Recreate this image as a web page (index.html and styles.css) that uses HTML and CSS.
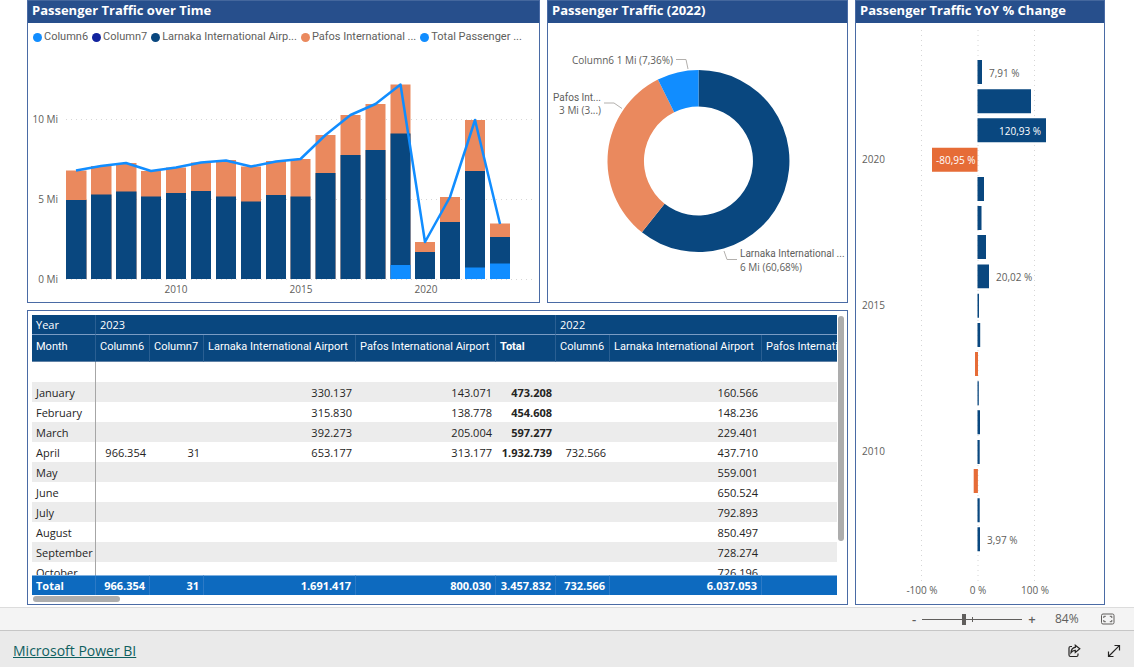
FILE: index.html
```html
<!DOCTYPE html>
<html lang="en">
<head>
<meta charset="utf-8">
<title>Passenger Traffic</title>
<link rel="stylesheet" href="styles.css">
</head>
<body>
<main class="report">
  <section class="panel panel-time">
    <h2 class="panel-title">Passenger Traffic over Time</h2>
    <ul class="legend">
      <li class="key key-sky">Column6</li>
      <li class="key key-indigo">Column7</li>
      <li class="key key-navy">Larnaka International Airp...</li>
      <li class="key key-coral">Pafos International ...</li>
      <li class="key key-sky">Total Passenger ...</li>
    </ul>
    <svg class="chart" viewBox="28 50 511 252" role="img" aria-label="Passengers by year">
      <g class="grid">
        <path d="M66 119.5H534M66 199.5H534M66 279.5H534"/>
      </g>
      <path class="fill-coral" d="M66 170.5h20.5V279h-20.5zM91 166h20.5V279h-20.5zM116 163h20.5V279h-20.5zM141 171h20V279h-20zM166 167.500h20V279h-20zM191 162.500h20V279h-20zM216 160h20V279h-20zM241 166.500h20V279h-20zM266 161h20V279h-20zM290.500 159h20V279h-20zM315.500 135h20V279h-20zM340.500 115h20V279h-20zM365.500 104h20V279h-20zM390.500 84.500h20V279h-20zM415 242h20V279h-20zM440 197h20V279h-20zM465 120h20V279h-20zM490 223.500h20V279h-20z"/>
      <path class="fill-navy" d="M66 200h20.5V279h-20.5zM91 194.500h20.5V279h-20.5zM116 191.500h20.5V279h-20.5zM141 196.500h20V279h-20zM166 193h20V279h-20zM191 191h20V279h-20zM216 196.500h20V279h-20zM241 201.500h20V279h-20zM266 195h20V279h-20zM290.500 196.500h20V279h-20zM315.500 173h20V279h-20zM340.500 155h20V279h-20zM365.500 150h20V279h-20zM390.500 133.500h20V279h-20zM415 252h20V279h-20zM440 222h20V279h-20zM465 171h20V279h-20zM490 237h20V279h-20z"/>
      <path class="fill-sky" d="M390.500 265h20V279h-20zM465 267.500h20V279h-20zM490 263.500h20V279h-20z"/>
      <polyline class="trend" points="76,170.500 101,166 126,163 151,171 176,167.500 201,162.500 226,160.500 251,166.500 276,161.500 300.500,159 325.500,135 350.500,115 375.500,104 400.500,84.500 425,242 450,197 475,120 500,224"/>
      <g class="label">
        <text class="end" x="58" y="123">10 Mi</text>
        <text class="end" x="58" y="203">5 Mi</text>
        <text class="end" x="58" y="283">0 Mi</text>
        <text class="mid" x="176" y="293">2010</text>
        <text class="mid" x="301" y="293">2015</text>
        <text class="mid" x="426" y="293">2020</text>
      </g>
    </svg>
  </section>

  <section class="panel panel-share">
    <h2 class="panel-title">Passenger Traffic (2022)</h2>
    <svg class="chart" viewBox="548 23 299 279" role="img" aria-label="Share of passengers in 2022">
      <path class="fill-navy" d="M698.500 70A91 91 0 1 1 641.900 232.300L664.600 203.700A54.500 54.500 0 1 0 698.500 106.500z"/>
      <path class="fill-coral" d="M641.900 232.300A91 91 0 0 1 657.900 79.600L674.200 112.200A54.500 54.500 0 0 0 664.600 203.700z"/>
      <path class="fill-sky" d="M657.900 79.600A91 91 0 0 1 698.500 70V106.500A54.500 54.500 0 0 0 674.200 112.200z"/>
      <path class="leader" d="M676 59.500H686L688 69M604 103H614L622 108.500M724 251L727 259.500H737"/>
      <g class="label">
        <text class="end" x="673" y="64">Column6 1 Mi (7,36%)</text>
        <text class="end name" x="601" y="101">Pafos Int...</text>
        <text class="end" x="601" y="114">3 Mi (3...)</text>
        <text class="name" x="740" y="257">Larnaka International ...</text>
        <text x="740" y="271">6 Mi (60,68%)</text>
      </g>
    </svg>
  </section>

  <section class="panel panel-change">
    <h2 class="panel-title">Passenger Traffic YoY % Change</h2>
    <svg class="chart" viewBox="856 23 248 581" role="img" aria-label="Year over year change">
      <g class="grid"><path d="M921.500 30V583M978 30V583M1034.500 30V583"/></g>
      <path class="fill-navy" d="M977.500 60h4.500v24h-4.500zM977.500 89.200h53.500v24h-53.500zM977.500 118.200h68.500v24h-68.500zM977.500 177h6.500v24h-6.500zM977.500 206h4v24h-4zM977.500 235h8.500v24h-8.500zM977.500 264.500h11.500v23.700h-11.500zM977.500 293.700h1.500v24h-1.500zM977.500 323h2.700v24h-2.700zM977.500 381.200h1.300v24h-1.300zM977.500 410.300h2.500v24h-2.500zM977.500 440h2.200v24h-2.200zM977.500 498.200h2.200v24h-2.200zM977.500 527.300h2.500v24h-2.500z"/>
      <path class="fill-orange" d="M932 147.700h45.500v24h-45.500zM975 352h3v24h-3zM973.700 469h4.200v24h-4.200z"/>
      <g class="label">
        <text x="989" y="77">7,91 %</text>
        <text class="on-bar" x="999" y="135">120,93 %</text>
        <text class="on-bar" x="936" y="164">-80,95 %</text>
        <text x="996" y="281">20,02 %</text>
        <text x="987" y="544">3,97 %</text>
        <text x="862" y="163">2020</text>
        <text x="862" y="309">2015</text>
        <text x="862" y="455">2010</text>
        <text class="mid" x="922" y="594">-100 %</text>
        <text class="mid" x="978" y="594">0 %</text>
        <text class="mid" x="1035" y="594">100 %</text>
      </g>
    </svg>
  </section>

  <section class="panel panel-table">
    <div class="scroller">
      <table class="matrix">
        <colgroup>
          <col class="w-month"><col class="w-short"><col class="w-short"><col class="w-larnaka"><col class="w-pafos"><col class="w-total"><col class="w-short"><col class="w-larnaka"><col class="w-pafos">
        </colgroup>
        <thead>
          <tr class="years"><th scope="row">Year</th><th colspan="5">2023</th><th colspan="3">2022</th></tr>
          <tr class="heads"><th>Month</th><th>Column6</th><th>Column7</th><th>Larnaka International Airport</th><th>Pafos International Airport</th><th class="strong">Total</th><th>Column6</th><th>Larnaka International Airport</th><th>Pafos International Airport</th></tr>
        </thead>
        <tbody>
          <tr><th scope="row"></th><td></td><td></td><td></td><td></td><td></td><td></td><td></td><td></td></tr>
          <tr><th scope="row">January</th><td></td><td></td><td>330.137</td><td>143.071</td><td class="strong">473.208</td><td></td><td>160.566</td><td></td></tr>
          <tr><th scope="row">February</th><td></td><td></td><td>315.830</td><td>138.778</td><td class="strong">454.608</td><td></td><td>148.236</td><td></td></tr>
          <tr><th scope="row">March</th><td></td><td></td><td>392.273</td><td>205.004</td><td class="strong">597.277</td><td></td><td>229.401</td><td></td></tr>
          <tr><th scope="row">April</th><td>966.354</td><td>31</td><td>653.177</td><td>313.177</td><td class="strong">1.932.739</td><td>732.566</td><td>437.710</td><td></td></tr>
          <tr><th scope="row">May</th><td></td><td></td><td></td><td></td><td></td><td></td><td>559.001</td><td></td></tr>
          <tr><th scope="row">June</th><td></td><td></td><td></td><td></td><td></td><td></td><td>650.524</td><td></td></tr>
          <tr><th scope="row">July</th><td></td><td></td><td></td><td></td><td></td><td></td><td>792.893</td><td></td></tr>
          <tr><th scope="row">August</th><td></td><td></td><td></td><td></td><td></td><td></td><td>850.497</td><td></td></tr>
          <tr><th scope="row">September</th><td></td><td></td><td></td><td></td><td></td><td></td><td>728.274</td><td></td></tr>
          <tr><th scope="row">October</th><td></td><td></td><td></td><td></td><td></td><td></td><td>726.196</td><td></td></tr>
        </tbody>
        <tfoot>
          <tr><th scope="row">Total</th><td>966.354</td><td>31</td><td>1.691.417</td><td>800.030</td><td>3.457.832</td><td>732.566</td><td>6.037.053</td><td></td></tr>
        </tfoot>
      </table>
    </div>
    <div class="bar-v"></div>
    <div class="bar-h"></div>
  </section>
</main>

<div class="zoombar">
  <button class="step" type="button" aria-label="Zoom out">-</button>
  <input class="slider" type="range" min="0" max="100" value="42" aria-label="Zoom">
  <button class="step" type="button" aria-label="Zoom in">+</button>
  <output class="percent">84%</output>
  <button class="icon-button" type="button" aria-label="Fit to page">
    <svg class="fit-icon" viewBox="0 0 14 12"><rect x="0.500" y="1" width="12.500" height="10" rx="1.500"/><path d="M2.800 5V3.300H4.800M8.800 3.300H10.800V5M10.800 7V8.700H8.800M4.800 8.700H2.800V7"/></svg>
  </button>
</div>

<footer class="footer">
  <a class="brand" href="#">Microsoft Power BI</a>
  <div class="actions">
    <button class="icon-button" type="button" aria-label="Share">
      <svg class="line-icon" viewBox="0 0 14 14"><path d="M5 2.500H3.500Q2 2.500 2 4V11Q2 12.500 3.500 12.500H9.500Q11 12.500 11 11V9.500"/><path d="M8.300 1.200L12.800 4.800L8.300 8.500V6.300Q5.500 6.200 4 8.600Q4.200 4 8.300 3.400Z"/></svg>
    </button>
    <button class="icon-button" type="button" aria-label="Full screen">
      <svg class="line-icon" viewBox="0 0 14 14"><path d="M2 12L12.300 1.700M7.500 1.500H12.500V6.500M1.500 7.500V12.500H6.500"/></svg>
    </button>
  </div>
</footer>
</body>
</html>
```
FILE: styles.css
```css
* { box-sizing: border-box; }

body {
  margin: 0;
  min-height: 100vh;
  display: flex;
  flex-direction: column;
  background: #fff;
  color: #252423;
  font-family: "Open Sans", "Noto Sans", sans-serif;
  font-size: 11px;
}

button {
  padding: 0;
  border: 0;
  background: none;
  color: inherit;
  font: inherit;
}

.report {
  display: grid;
  grid-template-columns: 513fr 301fr 250fr;
  grid-template-areas: "time share change" "table table change";
  align-items: start;
  gap: 7px;
  padding: 0 29px 2px 27px;
}

.panel {
  border: 1px solid #4a6ba5;
  border-top-width: 0;
  min-width: 0;
}

.panel-time { grid-area: time; }
.panel-share { grid-area: share; }
.panel-change { grid-area: change; }

.panel-title {
  margin: 0;
  padding: 0 4px;
  height: 23px;
  border-top: 1px solid #44679d;
  background: #274f8c;
  color: #fff;
  font-size: 13px;
  font-weight: 700;
  line-height: 18px;
  white-space: nowrap;
}

.chart { display: block; width: 100%; }

.legend {
  display: flex;
  gap: 4px;
  height: 27px;
  margin: 0;
  padding: 6px 5px 5px;
  list-style: none;
  color: #605e5c;
  font-family: Roboto, "Open Sans", sans-serif;
  line-height: 16px;
  white-space: nowrap;
}

.key { display: flex; align-items: center; gap: 2px; }
.key::before {
  content: "";
  width: 9px;
  height: 9px;
  border-radius: 50%;
  background: currentColor;
}
.key-sky::before { background: #118dff; }
.key-indigo::before { background: #12239e; }
.key-navy::before { background: #09477f; }
.key-coral::before { background: #ea895e; }

.fill-sky { fill: #118dff; }
.fill-navy { fill: #09477f; }
.fill-coral { fill: #ea895e; }
.fill-orange { fill: #e66c37; }
.trend { fill: none; stroke: #118dff; stroke-width: 2.5; stroke-linejoin: round; }
.grid path { fill: none; stroke: #d6d6d6; stroke-width: 1; stroke-dasharray: 1 4; }
.leader { fill: none; stroke: #b3b0ad; stroke-width: 1; }
.label { fill: #605e5c; font-size: 10px; }
.label .name { font-family: Roboto, "Open Sans", sans-serif; }
.label .end { text-anchor: end; }
.label .mid { text-anchor: middle; }
.label .on-bar { fill: #fff; }

.panel-table {
  grid-area: table;
  display: grid;
  grid-template-columns: 1fr 6px;
  gap: 1px;
  padding: 4px 3px 2px 4px;
  border-top-width: 1px;
}

.scroller { height: 280px; overflow: hidden; }

.matrix {
  width: 870px;
  table-layout: fixed;
  border-collapse: separate;
  border-spacing: 0;
  line-height: 16px;
  white-space: nowrap;
}
.w-month { width: 64px; }
.w-short { width: 54px; }
.w-larnaka { width: 152px; }
.w-pafos { width: 140px; }
.w-total { width: 60px; }

.matrix th, .matrix td { padding: 0 4px; font-weight: 400; }
.matrix th { text-align: left; }
.matrix td { text-align: right; }
.matrix .strong { font-weight: 700; }

.matrix thead th {
  border-right: 1px solid #2a5f92;
  background: #09477f;
  color: #fff;
}
.matrix .years th { height: 20px; border-bottom: 1px solid #7a9cc4; }
.matrix .heads th {
  height: 27px;
  padding-top: 4px;
  vertical-align: top;
  border-bottom: 1px solid #5f81a5;
  font-family: Roboto, "Open Sans", sans-serif;
}

.matrix tbody th, .matrix tbody td { height: 20px; padding-top: 2px; }
.matrix tbody th { border-right: 1px solid #a6a6a6; }
.matrix tbody tr:nth-child(even) { background: #ececec; }

.matrix tfoot th, .matrix tfoot td {
  position: sticky;
  bottom: 0;
  height: 20px;
  border-top: 1px solid #7fb0df;
  border-right: 1px solid #2c7ac6;
  background: #0d6abf;
  color: #fff;
  font-weight: 700;
}

.bar-v { height: 225px; margin-top: 1px; border-radius: 3px; background: #adadad; }
.bar-h { width: 87px; height: 6px; margin-left: 1px; border-radius: 3px; background: #adadad; }

.zoombar {
  display: flex;
  align-items: center;
  justify-content: flex-end;
  height: 23px;
  padding-right: 19px;
  border-top: 1px solid #dcdcdc;
  background: #f4f4f4;
  color: #605e5c;
}
.step { width: 14px; font-size: 13px; font-weight: 600; line-height: 16px; }
.slider {
  width: 100px;
  height: 11px;
  margin: 0 3px 0 1px;
  appearance: none;
  background:
    linear-gradient(#605e5c, #605e5c) 50% 50% / 1px 5px no-repeat,
    linear-gradient(#605e5c, #605e5c) 0 50% / 100% 1px no-repeat;
}
.slider::-webkit-slider-thumb { appearance: none; width: 4px; height: 11px; background: #605e5c; }
.percent { width: 62px; padding-left: 16px; font-size: 12px; line-height: 16px; }

.icon-button { display: flex; }
.fit-icon { width: 14px; height: 12px; fill: none; stroke: #605e5c; stroke-width: 1; }

.footer {
  flex: 1;
  display: flex;
  align-items: center;
  justify-content: space-between;
  padding: 4px 13px 0;
  min-height: 37px;
  border-top: 1px solid #c6c6c6;
  background: #eaeaea;
}
.brand { color: #0f5f5f; font-size: 14px; line-height: 20px; }
.actions { display: flex; gap: 26px; }
.line-icon { width: 14px; height: 14px; fill: none; stroke: #252423; stroke-width: 1.2; }
```
